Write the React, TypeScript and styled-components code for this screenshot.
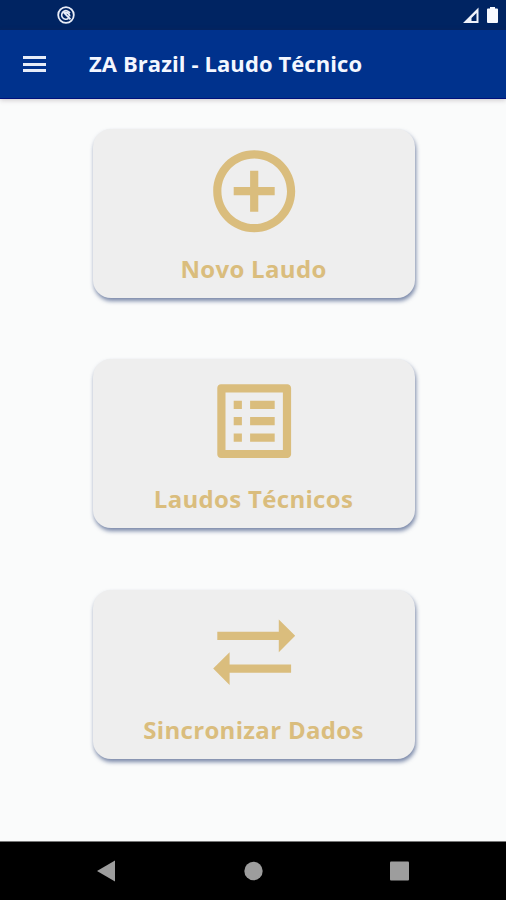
import React from 'react';
import styled, { createGlobalStyle } from 'styled-components';

const GlobalStyle = createGlobalStyle`
  * { box-sizing: border-box; }
  body { margin: 0; background: #fafbfb; font-family: "Open Sans", "Noto Sans", sans-serif; }
`;

const Screen = styled.div`
  display: flex;
  flex-direction: column;
  width: 506px;
  height: 900px;
  overflow: hidden;
  background: #fafbfb;
`;

const StatusBar = styled.header`
  display: flex;
  align-items: flex-start;
  justify-content: space-between;
  height: 30px;
  padding: 5px 8px 0 56px;
  background: #002462;
`;

const StatusIcons = styled.div`
  display: flex;
  gap: 8px;
  padding-top: 2px;
`;

const AppBar = styled.nav`
  display: flex;
  align-items: center;
  flex: none;
  height: 69px;
  padding: 0 0 2px 23px;
  background: #00328d;
  border-bottom: 1px solid #00107b;
  box-shadow: 0 1px 5px rgba(60, 40, 50, 0.25);
`;

const MenuButton = styled.button`
  display: flex;
  flex-direction: column;
  justify-content: space-between;
  width: 23px;
  height: 16px;
  margin: 2px 43px 0 0;
  padding: 0;
  border: 0;
  background: none;
`;

const MenuLine = styled.span`
  height: 3px;
  background: #e6ecf8;
`;

const Title = styled.h1`
  margin: 0;
  color: #f4f7ff;
  font-size: 22px;
  font-weight: 700;
  letter-spacing: 0.09px;
  line-height: 30px;
  white-space: nowrap;
`;

const Content = styled.main`
  display: flex;
  flex: 1;
  flex-direction: column;
  align-items: center;
  gap: 61.5px;
  padding-top: 29.5px;
`;

const Card = styled.button`
  display: flex;
  flex: none;
  flex-direction: column;
  align-items: center;
  width: 322px;
  height: 169px;
  margin-left: 1px;
  padding: 13px 0 0;
  border: 0;
  border-radius: 18px;
  background: #eeeeee;
  box-shadow: 1px 3px 4px rgba(34, 56, 112, 0.6);
  color: #dabd7d;
  font-family: inherit;
`;

const CardIcon = styled.svg`
  flex: none;
  width: 98.4px;
  height: 98.4px;
  margin-left: 1px;
  fill: currentColor;
`;

const CardLabel = styled.span`
  margin-top: 12px;
  font-size: 24px;
  font-weight: 700;
  letter-spacing: 0.31px;
  line-height: 33px;
  white-space: nowrap;
`;

const NavigationBar = styled.footer`
  display: flex;
  align-items: center;
  justify-content: space-between;
  height: 59px;
  padding: 0 96px 0 96px;
  background: #000;
  border-top: 1px solid #777;
`;

const NavIcon = styled.svg`
  width: 20px;
  height: 22px;
  fill: #9d9d9d;
`;

const actions = [
  {
    label: 'Novo Laudo',
    path: 'M13 7h-2v4H7v2h4v4h2v-4h4v-2h-4V7zm-1-5C6.48 2 2 6.48 2 12s4.48 10 10 10 10-4.48 10-10S17.52 2 12 2zm0 18c-4.41 0-8-3.59-8-8s3.59-8 8-8 8 3.59 8 8-3.59 8-8 8z',
  },
  {
    label: 'Laudos Técnicos',
    path: 'M19 5v14H5V5h14m1.1-2H3.9c-.5 0-.9.4-.9.9v16.2c0 .4.4.9.9.9h16.2c.4 0 .9-.5.9-.9V3.9c0-.5-.5-.9-.9-.9zM11 7h6v2h-6V7zm0 4h6v2h-6v-2zm0 4h6v2h-6zM7 7h2v2H7zm0 4h2v2H7zm0 4h2v2H7z',
  },
  {
    label: 'Sincronizar Dados',
    path: 'M22 8l-4-4v3H3v2h15v3l4-4zM2 16l4 4v-3h15v-2H6v-3l-4 4z',
  },
];

export default function App() {
  return (
    <>
      <GlobalStyle />
      <Screen>
        <StatusBar>
          <svg width="20" height="20" viewBox="0 0 20 20" fill="none" stroke="#e8edf8">
            <circle cx="10" cy="10" r="7.8" strokeWidth="1.8" />
            <path d="M12.6 13.4A4.3 4.3 0 1 1 13.9 8.2" strokeWidth="1.6" />
            <path d="M7.5 7.2l7 7.2M8.5 7.6q4.6-.6 5.2 3.8" strokeWidth="1.9" />
          </svg>
          <StatusIcons>
            <svg width="17" height="17" viewBox="0 0 17 17">
              <path fill="#f0f3fb" fillRule="evenodd" d="M1 16L16.5.5V16zM9.5 14h5V6L9.5 11z" />
            </svg>
            <svg width="11" height="17" viewBox="0 0 11 17">
              <path fill="#f8faff" d="M3 0h5v1.5h2q1 0 1 1V15q0 1-1 1H1q-1 0-1-1V2.5q0-1 1-1h2z" />
            </svg>
          </StatusIcons>
        </StatusBar>
        <AppBar>
          <MenuButton aria-label="Menu">
            <MenuLine />
            <MenuLine />
            <MenuLine />
          </MenuButton>
          <Title>ZA Brazil - Laudo Técnico</Title>
        </AppBar>
        <Content>
          {actions.map((a) => (
            <Card key={a.label}>
              <CardIcon viewBox="0 0 24 24">
                <path d={a.path} />
              </CardIcon>
              <CardLabel>{a.label}</CardLabel>
            </Card>
          ))}
        </Content>
        <NavigationBar>
          <NavIcon viewBox="0 0 20 22">
            <path d="M1 11L19 .5v21z" />
          </NavIcon>
          <NavIcon viewBox="0 0 20 22">
            <circle cx="10.5" cy="11" r="9.2" />
          </NavIcon>
          <NavIcon viewBox="0 0 20 22">
            <rect x="0" y="1.5" width="19" height="19" rx="1" />
          </NavIcon>
        </NavigationBar>
      </Screen>
    </>
  );
}
